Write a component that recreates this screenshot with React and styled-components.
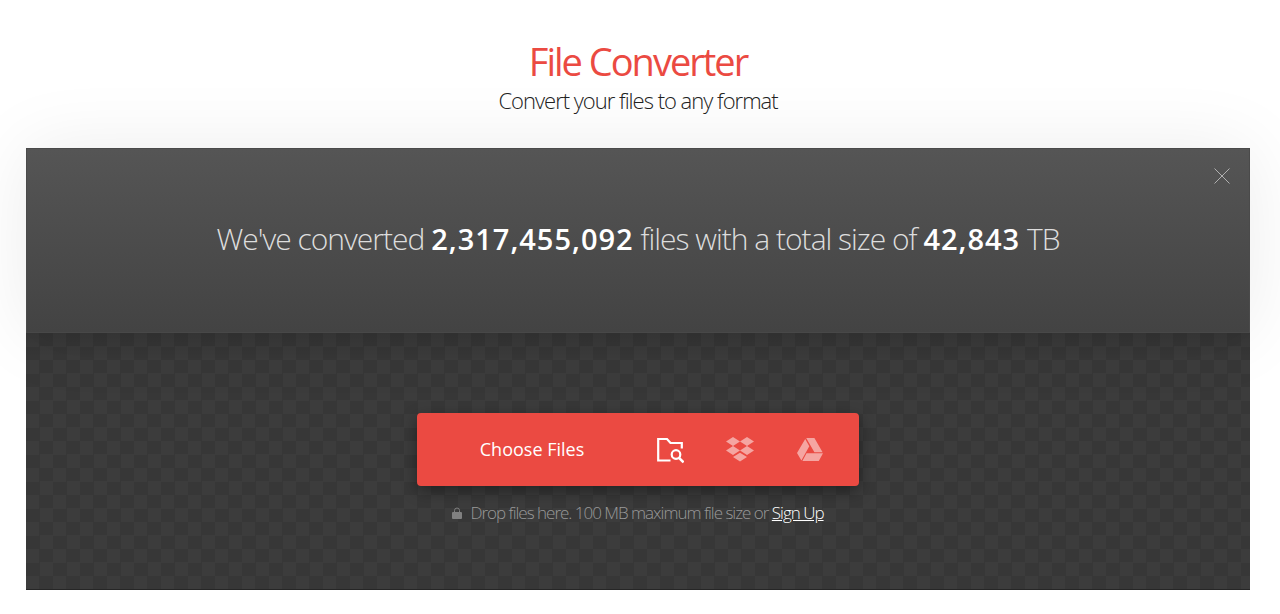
import React, { useState } from "react";
import styled, { createGlobalStyle } from "styled-components";

const GlobalStyle = createGlobalStyle`
  * { box-sizing: border-box; }
  body {
    margin: 0;
    background: #fff;
    font-family: "Open Sans", sans-serif;
    overflow-x: hidden;
  }
`;

const Page = styled.main`
  padding: 40px 30px 24px 26px;
`;

const Header = styled.header`
  height: 108px;
  text-align: center;
`;

const Title = styled.h1`
  margin: 0;
  color: #eb4a42;
  font-size: 38px;
  font-weight: 400;
  line-height: 42px;
  letter-spacing: -2px;
`;

const Subtitle = styled.p`
  margin: 4px 0 0;
  color: #222;
  font-size: 22px;
  font-weight: 300;
  line-height: 28px;
  letter-spacing: -1px;
`;

const Panel = styled.section`
  border-bottom: 1px solid #262626;
`;

const Stats = styled.div`
  position: relative;
  display: flex;
  align-items: center;
  justify-content: center;
  min-height: 185px;
  padding-bottom: 4px;
  border: 1px solid #4a4a4a;
  border-bottom-color: #484848;
  background: linear-gradient(#555, #434343);
  box-shadow: 0 0 75px rgba(0, 0, 0, 0.08);
`;

const StatsText = styled.p`
  margin: 0;
  color: #ddd;
  font-size: 30px;
  font-weight: 300;
  line-height: 40px;
  letter-spacing: -1px;
`;

const Figure = styled.strong`
  color: #fff;
  font-size: 29px;
  font-weight: 600;
  letter-spacing: 1px;
`;

const CloseButton = styled.button`
  position: absolute;
  top: 18px;
  right: 18px;
  display: flex;
  padding: 0;
  border: 0;
  background: none;
  color: #b0b0b0;
  cursor: pointer;
`;

const DropZone = styled.div`
  display: flex;
  flex-direction: column;
  align-items: center;
  min-height: 256px;
  padding: 80px 16px 64px;
  background:
    linear-gradient(rgba(0, 0, 0, 0.1), transparent 24px),
    repeating-conic-gradient(#373737 0% 25%, #3c3c3c 0% 50%) 0 0 / 27px 27px;
`;

const Picker = styled.div`
  display: flex;
  align-items: center;
  width: 442px;
  max-width: 100%;
  height: 73px;
  padding-right: 14px;
  border-radius: 4px;
  background: #eb4a42;
  box-shadow: 0 5px 15px rgba(0, 0, 0, 0.4);
`;

const ChooseButton = styled.button`
  flex: 1;
  height: 100%;
  padding: 0 0 2px 12px;
  border: 0;
  background: none;
  color: #fff;
  font-family: inherit;
  font-size: 18px;
  cursor: pointer;
`;

const SourceButton = styled.button`
  display: flex;
  align-items: center;
  justify-content: center;
  width: 70px;
  height: 100%;
  padding: 0;
  border: 0;
  background: none;
  color: #fff;
  opacity: ${(p) => (p.$active ? 1 : 0.5)};
  cursor: pointer;
`;

const Hint = styled.p`
  display: flex;
  align-items: center;
  gap: 8px;
  margin: 16px 0 0;
  color: #999;
  font-size: 17px;
  font-weight: 300;
  line-height: 22px;
  letter-spacing: -1px;
`;

const SignUp = styled.a`
  color: #fff;
  text-decoration: underline;
`;

const CloseIcon = () => (
  <svg width="18" height="18" viewBox="0 0 18 18" fill="none" stroke="currentColor" aria-hidden="true">
    <path d="M1.5 1.5 16.5 16.5M16.5 1.5 1.5 16.5" />
  </svg>
);

const FolderSearchIcon = () => (
  <svg width="28" height="28" viewBox="0 0 28 28" fill="none" stroke="currentColor" strokeWidth="2.2" aria-hidden="true">
    <path d="M14.5 24.5H2.2V3H11l3.5 4h11.3V12.5" />
    <circle cx="20" cy="18.5" r="4.3" />
    <path d="m23 21.8 4.6 4.6" strokeWidth="2.6" />
  </svg>
);

const DropboxIcon = () => (
  <svg width="28" height="26" viewBox="0 0 28 26" fill="currentColor" aria-hidden="true">
    <path d="m7 0 7 4.5L7 9 0 4.5zM21 0l7 4.5L21 9l-7-4.5zM7 9l7 4.5L7 18l-7-4.5zM21 9l7 4.5-7 4.5-7-4.5zM14 15.7l7 4.4-7 4.5-7-4.5z" />
  </svg>
);

const DriveIcon = () => (
  <svg width="26" height="24" viewBox="0 0 26 24" fill="currentColor" aria-hidden="true">
    <path d="M8.2 1 12.3 8.3 4.4 22.4 0 15zM9.2 0h8.2l8.2 14.3h-8.2zM9.5 15.3H26L21.8 23H5.4z" />
  </svg>
);

const LockIcon = () => (
  <svg width="10" height="12" viewBox="0 0 10 12" aria-hidden="true">
    <path d="M2.5 6V3.5a2.5 2.5 0 0 1 5 0V6" fill="none" stroke="#808080" />
    <rect y="5" width="10" height="7" rx="1" fill="#808080" />
  </svg>
);

export default function App() {
  const [showStats, setShowStats] = useState(true);
  return (
    <>
      <GlobalStyle />
      <Page>
        <Header>
          <Title>File Converter</Title>
          <Subtitle>Convert your files to any format</Subtitle>
        </Header>
        <Panel>
          {showStats && (
            <Stats>
              <StatsText>
                We've converted <Figure>2,317,455,092</Figure> files with a total size of{" "}
                <Figure>42,843</Figure> TB
              </StatsText>
              <CloseButton type="button" aria-label="Close" onClick={() => setShowStats(false)}>
                <CloseIcon />
              </CloseButton>
            </Stats>
          )}
          <DropZone>
            <Picker>
              <ChooseButton type="button">Choose Files</ChooseButton>
              <SourceButton type="button" $active aria-label="From computer">
                <FolderSearchIcon />
              </SourceButton>
              <SourceButton type="button" aria-label="From Dropbox">
                <DropboxIcon />
              </SourceButton>
              <SourceButton type="button" aria-label="From Google Drive">
                <DriveIcon />
              </SourceButton>
            </Picker>
            <Hint>
              <LockIcon />
              <span>
                Drop files here. 100 MB maximum file size or <SignUp href="#signup">Sign Up</SignUp>
              </span>
            </Hint>
          </DropZone>
        </Panel>
      </Page>
    </>
  );
}
